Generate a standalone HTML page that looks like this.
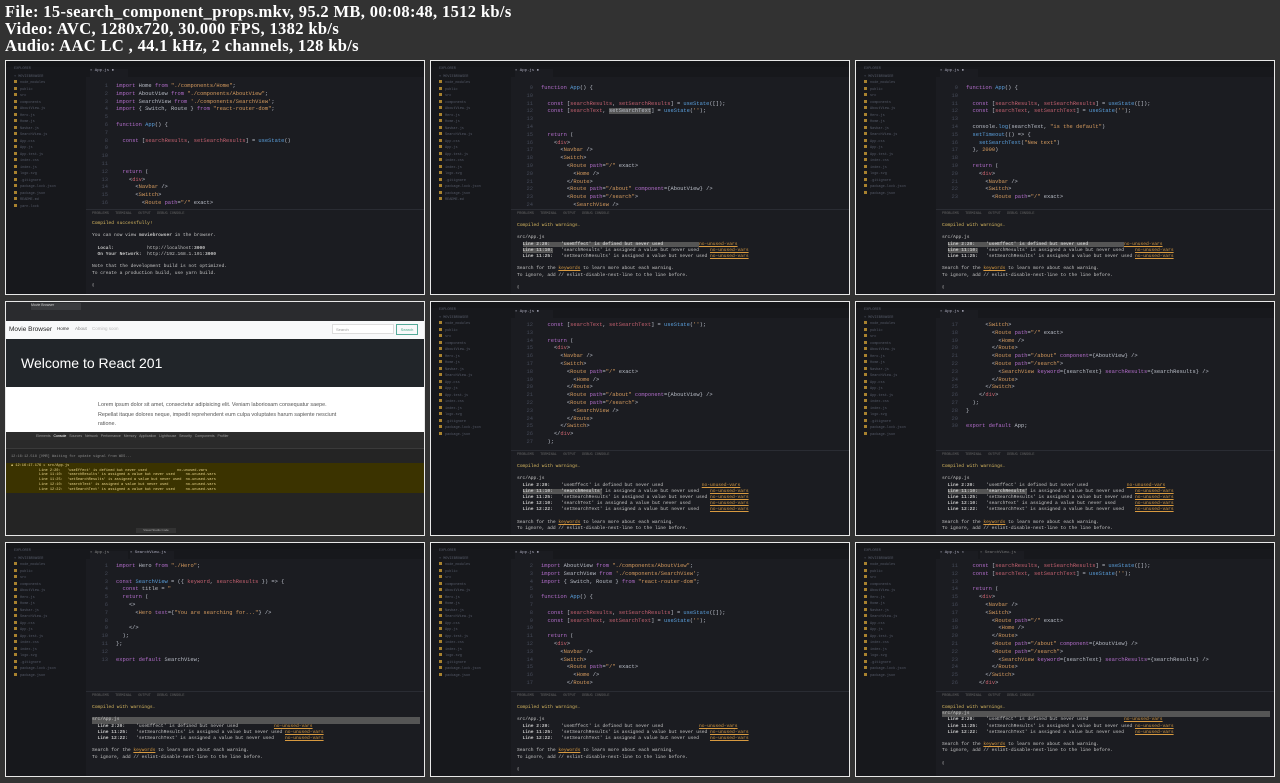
<!DOCTYPE html>
<html><head><meta charset="utf-8"><style>
body{margin:0;width:1280px;height:783px;background:#323232;overflow:hidden;font-family:"Liberation Serif",serif;position:relative}
.hd{position:absolute;left:5px;color:#fff;font-weight:bold;font-size:16.5px;line-height:17px;white-space:nowrap;letter-spacing:0.35px}
.t{position:absolute;width:418px;height:233px;border:1px solid #e8e8e8;background:#1b1c21;overflow:hidden;font-family:"Liberation Mono",monospace}
.tb{position:absolute;left:0;top:0;right:0;height:6px;background:#151619}
.sb{position:absolute;left:0;top:6px;width:80px;bottom:0;background:#17181c}
.sb div{height:6.5px;margin-left:8px;font-size:3.5px;color:#555a68}
.sb i{display:inline-block;width:3px;height:3px;background:#a8822f;margin-right:3px}
.tabs{position:absolute;left:80px;top:6px;right:0;height:10px;background:#17181c}
.tab{position:absolute;left:4px;top:2px;width:38px;height:8px;background:#1b1c21;color:#aab;font-size:4px}
.code{position:absolute;left:82px;top:20px;right:0;font-size:5.4px;line-height:7.8px;color:#b8bcc6;white-space:pre}
.code .n{color:#444957;display:inline-block;width:20px;text-align:right;margin-right:8px}
.k{color:#b06cc8}.s{color:#d49a5e}.g{color:#cc6470}.v{color:#c2606f}.f{color:#5a9fdc}.a{color:#b06cc8}
.pt{position:absolute;left:80px;right:0;top:148px;height:8px;border-top:1px solid #2a2c33;font-size:3.5px;color:#666;padding:2px 0 0 6px;white-space:pre}
.term{position:absolute;left:86px;top:162px;right:0;font-size:4.6px;line-height:6.2px;color:#c4c4c4;white-space:pre}
.y{color:#d8b860}.u{color:#d89a40;text-decoration:underline}
.hl{background:#555}
</style></head><body>
<div class="hd" style="top:3px">File: 15-search_component_props.mkv, 95.2 MB, 00:08:48, 1512 kb/s</div>
<div class="hd" style="top:20px">Video: AVC, 1280x720, 30.000 FPS, 1382 kb/s</div>
<div class="hd" style="top:37px">Audio: AAC LC , 44.1 kHz, 2 channels, 128 kb/s</div>

<!-- row1 col1 -->
<div class="t" style="left:5px;top:60px">
<div class="tb"></div><div class="sb"><div>EXPLORER</div><div>▾ MOVIEBROWSER</div><div><i></i>node_modules</div><div><i></i>public</div><div><i></i>src</div><div><i></i>components</div><div><i></i>AboutView.js</div><div><i></i>Hero.js</div><div><i></i>Home.js</div><div><i></i>Navbar.js</div><div><i></i>SearchView.js</div><div><i></i>App.css</div><div><i></i>App.js</div><div><i></i>App.test.js</div><div><i></i>index.css</div><div><i></i>index.js</div><div><i></i>logo.svg</div><div><i></i>.gitignore</div><div><i></i>package-lock.json</div><div><i></i>package.json</div><div><i></i>README.md</div><div><i></i>yarn.lock</div></div>
<div class="tabs"><div class="tab">▪ App.js ●</div></div>
<div class="code" style="top:22px"><span class="n">1</span><span class="k">import</span> Home <span class="k">from</span> <span class="s">"./components/Home"</span>;
<span class="n">2</span><span class="k">import</span> AboutView <span class="k">from</span> <span class="s">"./components/AboutView"</span>;
<span class="n">3</span><span class="k">import</span> SearchView <span class="k">from</span> <span class="s">'./components/SearchView'</span>;
<span class="n">4</span><span class="k">import</span> { Switch, Route } <span class="k">from</span> <span class="s">"react-router-dom"</span>;
<span class="n">5</span>
<span class="n">6</span><span class="k">function</span> <span class="f">App</span>() {
<span class="n">7</span>
<span class="n">8</span>  <span class="k">const</span> [<span class="v">searchResults</span>, <span class="v">setSearchResults</span>] = <span class="f">useState</span>()
<span class="n">9</span>
<span class="n">10</span>
<span class="n">11</span>
<span class="n">12</span>  <span class="k">return</span> (
<span class="n">13</span>    &lt;<span class="g">div</span>&gt;
<span class="n">14</span>      &lt;<span class="s">Navbar</span> /&gt;
<span class="n">15</span>      &lt;<span class="s">Switch</span>&gt;
<span class="n">16</span>        &lt;<span class="s">Route</span> <span class="a">path</span>=<span class="s">"/"</span> exact&gt;</div>
<div class="pt">PROBLEMS   TERMINAL   OUTPUT   DEBUG CONSOLE</div>
<div class="term" style="top:160px"><span class="y">Compiled successfully!</span>

You can now view <b>moviebrowser</b> in the browser.

  <b>Local:</b>            http://localhost:<b>3000</b>
  <b>On Your Network:</b>  http://192.168.1.101:<b>3000</b>

Note that the development build is not optimized.
To create a production build, use yarn build.

▯</div>
</div>

<!-- row1 col2 -->
<div class="t" style="left:430px;top:60px">
<div class="tb"></div><div class="sb"><div>EXPLORER</div><div>▾ MOVIEBROWSER</div><div><i></i>node_modules</div><div><i></i>public</div><div><i></i>src</div><div><i></i>components</div><div><i></i>AboutView.js</div><div><i></i>Hero.js</div><div><i></i>Home.js</div><div><i></i>Navbar.js</div><div><i></i>SearchView.js</div><div><i></i>App.css</div><div><i></i>App.js</div><div><i></i>App.test.js</div><div><i></i>index.css</div><div><i></i>index.js</div><div><i></i>logo.svg</div><div><i></i>.gitignore</div><div><i></i>package-lock.json</div><div><i></i>package.json</div><div><i></i>README.md</div></div>
<div class="tabs"><div class="tab">▪ App.js ●</div></div>
<div class="code" style="top:24px"><span class="n">9</span><span class="k">function</span> <span class="f">App</span>() {
<span class="n">10</span>
<span class="n">11</span>  <span class="k">const</span> [<span class="v">searchResults</span>, <span class="v">setSearchResults</span>] = <span class="f">useState</span>([]);
<span class="n">12</span>  <span class="k">const</span> [<span class="v">searchText</span>, <span class="hl">setSearchText</span>] = <span class="f">useState</span>(<span class="s">''</span>);
<span class="n">13</span>
<span class="n">14</span>
<span class="n">15</span>  <span class="k">return</span> (
<span class="n">16</span>    &lt;<span class="g">div</span>&gt;
<span class="n">17</span>      &lt;<span class="s">Navbar</span> /&gt;
<span class="n">18</span>      &lt;<span class="s">Switch</span>&gt;
<span class="n">19</span>        &lt;<span class="s">Route</span> <span class="a">path</span>=<span class="s">"/"</span> exact&gt;
<span class="n">20</span>          &lt;<span class="s">Home</span> /&gt;
<span class="n">21</span>        &lt;/<span class="s">Route</span>&gt;
<span class="n">22</span>        &lt;<span class="s">Route</span> <span class="a">path</span>=<span class="s">"/about"</span> <span class="a">component</span>={AboutView} /&gt;
<span class="n">23</span>        &lt;<span class="s">Route</span> <span class="a">path</span>=<span class="s">"/search"</span>&gt;
<span class="n">24</span>          &lt;<span class="s">SearchView</span> /&gt;</div>
<div class="pt">PROBLEMS   TERMINAL   OUTPUT   DEBUG CONSOLE</div>
<div class="term"><span class="y">Compiled with warnings.</span>

src/App.js
  <b class="hl">Line 2:20:    'useEffect' is defined but never used             </b><span class="u">no-unused-vars</span>
  <b class="hl">Line 11:10:</b>   'searchResults' is assigned a value but never used    <span class="u">no-unused-vars</span>
  <b>Line 11:25:</b>   'setSearchResults' is assigned a value but never used <span class="u">no-unused-vars</span>

Search for the <span class="u">keywords</span> to learn more about each warning.
To ignore, add // eslint-disable-next-line to the line before.

▯</div>
</div>

<!-- row1 col3 -->
<div class="t" style="left:855px;top:60px">
<div class="tb"></div><div class="sb"><div>EXPLORER</div><div>▾ MOVIEBROWSER</div><div><i></i>node_modules</div><div><i></i>public</div><div><i></i>src</div><div><i></i>components</div><div><i></i>AboutView.js</div><div><i></i>Hero.js</div><div><i></i>Home.js</div><div><i></i>Navbar.js</div><div><i></i>SearchView.js</div><div><i></i>App.css</div><div><i></i>App.js</div><div><i></i>App.test.js</div><div><i></i>index.css</div><div><i></i>index.js</div><div><i></i>logo.svg</div><div><i></i>.gitignore</div><div><i></i>package-lock.json</div><div><i></i>package.json</div></div>
<div class="tabs"><div class="tab">▪ App.js ●</div></div>
<div class="code" style="top:24px"><span class="n">9</span><span class="k">function</span> <span class="f">App</span>() {
<span class="n">10</span>
<span class="n">11</span>  <span class="k">const</span> [<span class="v">searchResults</span>, <span class="v">setSearchResults</span>] = <span class="f">useState</span>([]);
<span class="n">12</span>  <span class="k">const</span> [<span class="v">searchText</span>, <span class="v">setSearchText</span>] = <span class="f">useState</span>(<span class="s">''</span>);
<span class="n">13</span>
<span class="n">14</span>  console.<span class="f">log</span>(searchText, <span class="s">"is the default"</span>)
<span class="n">15</span>  <span class="f">setTimeout</span>(() =&gt; {
<span class="n">16</span>    <span class="f">setSearchText</span>(<span class="s">"New text"</span>)
<span class="n">17</span>  }, <span class="s">2000</span>)
<span class="n">18</span>
<span class="n">19</span>  <span class="k">return</span> (
<span class="n">20</span>    &lt;<span class="g">div</span>&gt;
<span class="n">21</span>      &lt;<span class="s">Navbar</span> /&gt;
<span class="n">22</span>      &lt;<span class="s">Switch</span>&gt;
<span class="n">23</span>        &lt;<span class="s">Route</span> <span class="a">path</span>=<span class="s">"/"</span> exact&gt;</div>
<div class="pt">PROBLEMS   TERMINAL   OUTPUT   DEBUG CONSOLE</div>
<div class="term"><span class="y">Compiled with warnings.</span>

src/App.js
  <b class="hl">Line 2:20:    'useEffect' is defined but never used             </b><span class="u">no-unused-vars</span>
  <b class="hl">Line 11:10:</b>   'searchResults' is assigned a value but never used    <span class="u">no-unused-vars</span>
  <b>Line 11:25:</b>   'setSearchResults' is assigned a value but never used <span class="u">no-unused-vars</span>

Search for the <span class="u">keywords</span> to learn more about each warning.
To ignore, add // eslint-disable-next-line to the line before.

▯</div>
</div>

<!-- row2 col1 browser -->
<div class="t" style="left:5px;top:301px;background:#fff;font-family:'Liberation Sans',sans-serif">
<div style="position:absolute;left:0;top:0;right:0;height:19px;background:#2a2b2e"></div>
<div style="position:absolute;left:25px;top:1px;width:50px;height:7px;background:#3a3b3e;font-size:3.5px;color:#ccc">Movie Browser</div>
<div style="position:absolute;left:0;top:19px;right:0;height:18px;background:#f8f9fa;font-size:6.5px;color:#222">
<span style="position:absolute;left:3px;top:5px">Movie Browser</span><span style="position:absolute;left:51px;top:5px;font-size:4.5px">Home</span><span style="position:absolute;left:69px;top:5px;font-size:4.5px;color:#888">About</span><span style="position:absolute;left:86px;top:5px;font-size:4.5px;color:#bbb">Coming soon</span>
<span style="position:absolute;left:326px;top:3px;width:62px;height:10px;border:1px solid #ddd;background:#fff;font-size:4px;color:#999;padding-left:3px;box-sizing:border-box;line-height:9px">Search</span>
<span style="position:absolute;left:390px;top:3px;width:22px;height:11px;border:1px solid #5a9;font-size:4px;color:#4a8;text-align:center;line-height:10px;box-sizing:border-box">Search</span></div>
<div style="position:absolute;left:0;top:37px;right:0;height:48px;background:#212529;color:#fff;font-size:14px"><span style="position:absolute;left:15px;top:16px">Welcome to React 201</span></div>
<div style="position:absolute;left:92px;top:99px;width:240px;font-size:5.4px;line-height:9.5px;color:#555">Lorem ipsum dolor sit amet, consectetur adipisicing elit. Veniam laboriosam consequatur saepe. Repellat itaque dolores neque, impedit reprehendent eum culpa voluptates harum sapiente nesciunt ratione.</div>
<div style="position:absolute;left:0;top:130px;right:0;bottom:0;background:#242424"></div>
<div style="position:absolute;left:0;top:130px;right:0;height:8px;background:#2d2d2d;font-size:3.5px;color:#999;padding:2px 0 0 30px;box-sizing:border-box;white-space:pre">Elements   <span style="color:#fff">Console</span>   Sources   Network   Performance   Memory   Application   Lighthouse   Security   Components   Profiler</div>
<div style="position:absolute;left:0;top:138px;right:0;height:8px;background:#2a2a2a;border-bottom:1px solid #3a3a3a"></div>
<div style="position:absolute;left:0;top:161px;right:0;height:29px;background:#3b3300;font-family:'Liberation Mono',monospace;font-size:3.6px;line-height:4.7px;color:#e8d48a;white-space:pre;padding:1px 0 0 5px">▲ 12:16:17.176 ▸ src/App.js
             Line 2:20:   'useEffect' is defined but never used              no-unused-vars
             Line 11:10:  'searchResults' is assigned a value but never used     no-unused-vars
             Line 11:25:  'setSearchResults' is assigned a value but never used  no-unused-vars
             Line 12:10:  'searchText' is assigned a value but never used        no-unused-vars
             Line 12:22:  'setSearchText' is assigned a value but never used     no-unused-vars</div>
<div style="position:absolute;left:5px;top:153px;font-family:'Liberation Mono',monospace;font-size:3.6px;color:#888">12:16:12.518 [HMR] Waiting for update signal from WDS...</div>
<div style="position:absolute;left:130px;top:226px;width:40px;height:5px;background:#333;font-size:3px;color:#aaa;text-align:center">Visual Studio Code</div>
</div>

<!-- row2 col2 -->
<div class="t" style="left:430px;top:301px">
<div class="tb"></div><div class="sb"><div>EXPLORER</div><div>▾ MOVIEBROWSER</div><div><i></i>node_modules</div><div><i></i>public</div><div><i></i>src</div><div><i></i>components</div><div><i></i>AboutView.js</div><div><i></i>Hero.js</div><div><i></i>Home.js</div><div><i></i>Navbar.js</div><div><i></i>SearchView.js</div><div><i></i>App.css</div><div><i></i>App.js</div><div><i></i>App.test.js</div><div><i></i>index.css</div><div><i></i>index.js</div><div><i></i>logo.svg</div><div><i></i>.gitignore</div><div><i></i>package-lock.json</div><div><i></i>package.json</div></div>
<div class="tabs"><div class="tab">▪ App.js ●</div></div>
<div class="code" style="top:20px"><span class="n">12</span>  <span class="k">const</span> [<span class="v">searchText</span>, <span class="v">setSearchText</span>] = <span class="f">useState</span>(<span class="s">''</span>);
<span class="n">13</span>
<span class="n">14</span>  <span class="k">return</span> (
<span class="n">15</span>    &lt;<span class="g">div</span>&gt;
<span class="n">16</span>      &lt;<span class="s">Navbar</span> /&gt;
<span class="n">17</span>      &lt;<span class="s">Switch</span>&gt;
<span class="n">18</span>        &lt;<span class="s">Route</span> <span class="a">path</span>=<span class="s">"/"</span> exact&gt;
<span class="n">19</span>          &lt;<span class="s">Home</span> /&gt;
<span class="n">20</span>        &lt;/<span class="s">Route</span>&gt;
<span class="n">21</span>        &lt;<span class="s">Route</span> <span class="a">path</span>=<span class="s">"/about"</span> <span class="a">component</span>={AboutView} /&gt;
<span class="n">22</span>        &lt;<span class="s">Route</span> <span class="a">path</span>=<span class="s">"/search"</span>&gt;
<span class="n">23</span>          &lt;<span class="s">SearchView</span> /&gt;
<span class="n">24</span>        &lt;/<span class="s">Route</span>&gt;
<span class="n">25</span>      &lt;/<span class="s">Switch</span>&gt;
<span class="n">26</span>    &lt;/<span class="g">div</span>&gt;
<span class="n">27</span>  );</div>
<div class="pt">PROBLEMS   TERMINAL   OUTPUT   DEBUG CONSOLE</div>
<div class="term"><span class="y">Compiled with warnings.</span>

src/App.js
  <b>Line 2:20:</b>    'useEffect' is defined but never used              <span class="u">no-unused-vars</span>
  <b class="hl">Line 11:10:   'searchResults'</b> is assigned a value but never used    <span class="u">no-unused-vars</span>
  <b>Line 11:25:</b>   'setSearchResults' is assigned a value but never used <span class="u">no-unused-vars</span>
  <b>Line 12:10:</b>   'searchText' is assigned a value but never used       <span class="u">no-unused-vars</span>
  <b>Line 12:22:</b>   'setSearchText' is assigned a value but never used    <span class="u">no-unused-vars</span>

Search for the <span class="u">keywords</span> to learn more about each warning.
To ignore, add // eslint-disable-next-line to the line before.</div>
</div>

<!-- row2 col3 -->
<div class="t" style="left:855px;top:301px">
<div class="tb"></div><div class="sb"><div>EXPLORER</div><div>▾ MOVIEBROWSER</div><div><i></i>node_modules</div><div><i></i>public</div><div><i></i>src</div><div><i></i>components</div><div><i></i>AboutView.js</div><div><i></i>Hero.js</div><div><i></i>Home.js</div><div><i></i>Navbar.js</div><div><i></i>SearchView.js</div><div><i></i>App.css</div><div><i></i>App.js</div><div><i></i>App.test.js</div><div><i></i>index.css</div><div><i></i>index.js</div><div><i></i>logo.svg</div><div><i></i>.gitignore</div><div><i></i>package-lock.json</div><div><i></i>package.json</div></div>
<div class="tabs"><div class="tab">▪ App.js ●</div></div>
<div class="code" style="top:20px"><span class="n">17</span>      &lt;<span class="s">Switch</span>&gt;
<span class="n">18</span>        &lt;<span class="s">Route</span> <span class="a">path</span>=<span class="s">"/"</span> exact&gt;
<span class="n">19</span>          &lt;<span class="s">Home</span> /&gt;
<span class="n">20</span>        &lt;/<span class="s">Route</span>&gt;
<span class="n">21</span>        &lt;<span class="s">Route</span> <span class="a">path</span>=<span class="s">"/about"</span> <span class="a">component</span>={AboutView} /&gt;
<span class="n">22</span>        &lt;<span class="s">Route</span> <span class="a">path</span>=<span class="s">"/search"</span>&gt;
<span class="n">23</span>          &lt;<span class="s">SearchView</span> <span class="a">keyword</span>={searchText} <span class="a">searchResults</span>={searchResults} /&gt;
<span class="n">24</span>        &lt;/<span class="s">Route</span>&gt;
<span class="n">25</span>      &lt;/<span class="s">Switch</span>&gt;
<span class="n">26</span>    &lt;/<span class="g">div</span>&gt;
<span class="n">27</span>  );
<span class="n">28</span>}
<span class="n">29</span>
<span class="n">30</span><span class="k">export default</span> App;</div>
<div class="pt">PROBLEMS   TERMINAL   OUTPUT   DEBUG CONSOLE</div>
<div class="term"><span class="y">Compiled with warnings.</span>

src/App.js
  <b>Line 2:20:</b>    'useEffect' is defined but never used              <span class="u">no-unused-vars</span>
  <b class="hl">Line 11:10:   'searchResults'</b> is assigned a value but never used    <span class="u">no-unused-vars</span>
  <b>Line 11:25:</b>   'setSearchResults' is assigned a value but never used <span class="u">no-unused-vars</span>
  <b>Line 12:10:</b>   'searchText' is assigned a value but never used       <span class="u">no-unused-vars</span>
  <b>Line 12:22:</b>   'setSearchText' is assigned a value but never used    <span class="u">no-unused-vars</span>

Search for the <span class="u">keywords</span> to learn more about each warning.
To ignore, add // eslint-disable-next-line to the line before.</div>
</div>

<!-- row3 col1 -->
<div class="t" style="left:5px;top:542px">
<div class="tb"></div><div class="sb"><div>EXPLORER</div><div>▾ MOVIEBROWSER</div><div><i></i>node_modules</div><div><i></i>public</div><div><i></i>src</div><div><i></i>components</div><div><i></i>AboutView.js</div><div><i></i>Hero.js</div><div><i></i>Home.js</div><div><i></i>Navbar.js</div><div><i></i>SearchView.js</div><div><i></i>App.css</div><div><i></i>App.js</div><div><i></i>App.test.js</div><div><i></i>index.css</div><div><i></i>index.js</div><div><i></i>logo.svg</div><div><i></i>.gitignore</div><div><i></i>package-lock.json</div><div><i></i>package.json</div></div>
<div class="tabs"><div class="tab" style="color:#888">▪ App.js</div><div class="tab" style="left:44px;width:44px">▪ SearchView.js</div></div>
<div class="code" style="top:20px"><span class="n">1</span><span class="k">import</span> Hero <span class="k">from</span> <span class="s">"./Hero"</span>;
<span class="n">2</span>
<span class="n">3</span><span class="k">const</span> <span class="f">SearchView</span> = ({ <span class="v">keyword</span>, <span class="v">searchResults</span> }) =&gt; {
<span class="n">4</span>  <span class="k">const</span> title = <span class="s">"</span>
<span class="n">5</span>  <span class="k">return</span> (
<span class="n">6</span>    &lt;&gt;
<span class="n">7</span>      &lt;<span class="s">Hero</span> <span class="a">text</span>={<span class="s">"You are searching for..."</span>} /&gt;
<span class="n">8</span>
<span class="n">9</span>    &lt;/&gt;
<span class="n">10</span>  );
<span class="n">11</span>};
<span class="n">12</span>
<span class="n">13</span><span class="k">export default</span> SearchView;</div>
<div class="pt">PROBLEMS   TERMINAL   OUTPUT   DEBUG CONSOLE</div>
<div class="term"><span class="y">Compiled with warnings.</span>

<span style="background:#555;display:inline-block;width:328px">src/App.js</span>
  <b>Line 2:20:</b>    'useEffect' is defined but never used             <span class="u">no-unused-vars</span>
  <b>Line 11:25:</b>   'setSearchResults' is assigned a value but never used <span class="u">no-unused-vars</span>
  <b>Line 12:22:</b>   'setSearchText' is assigned a value but never used    <span class="u">no-unused-vars</span>

Search for the <span class="u">keywords</span> to learn more about each warning.
To ignore, add // eslint-disable-next-line to the line before.</div>
</div>

<!-- row3 col2 -->
<div class="t" style="left:430px;top:542px">
<div class="tb"></div><div class="sb"><div>EXPLORER</div><div>▾ MOVIEBROWSER</div><div><i></i>node_modules</div><div><i></i>public</div><div><i></i>src</div><div><i></i>components</div><div><i></i>AboutView.js</div><div><i></i>Hero.js</div><div><i></i>Home.js</div><div><i></i>Navbar.js</div><div><i></i>SearchView.js</div><div><i></i>App.css</div><div><i></i>App.js</div><div><i></i>App.test.js</div><div><i></i>index.css</div><div><i></i>index.js</div><div><i></i>logo.svg</div><div><i></i>.gitignore</div><div><i></i>package-lock.json</div><div><i></i>package.json</div></div>
<div class="tabs"><div class="tab">▪ App.js ●</div></div>
<div class="code" style="top:20px"><span class="n">2</span><span class="k">import</span> AboutView <span class="k">from</span> <span class="s">"./components/AboutView"</span>;
<span class="n">3</span><span class="k">import</span> SearchView <span class="k">from</span> <span class="s">'./components/SearchView'</span>;
<span class="n">4</span><span class="k">import</span> { Switch, Route } <span class="k">from</span> <span class="s">"react-router-dom"</span>;
<span class="n">5</span>
<span class="n">6</span><span class="k">function</span> <span class="f">App</span>() {
<span class="n">7</span>
<span class="n">8</span>  <span class="k">const</span> [<span class="v">searchResults</span>, <span class="v">setSearchResults</span>] = <span class="f">useState</span>([]);
<span class="n">9</span>  <span class="k">const</span> [<span class="v">searchText</span>, <span class="v">setSearchText</span>] = <span class="f">useState</span>(<span class="s">''</span>);
<span class="n">10</span>
<span class="n">11</span>  <span class="k">return</span> (
<span class="n">12</span>    &lt;<span class="g">div</span>&gt;
<span class="n">13</span>      &lt;<span class="s">Navbar</span> /&gt;
<span class="n">14</span>      &lt;<span class="s">Switch</span>&gt;
<span class="n">15</span>        &lt;<span class="s">Route</span> <span class="a">path</span>=<span class="s">"/"</span> exact&gt;
<span class="n">16</span>          &lt;<span class="s">Home</span> /&gt;
<span class="n">17</span>        &lt;/<span class="s">Route</span>&gt;</div>
<div class="pt">PROBLEMS   TERMINAL   OUTPUT   DEBUG CONSOLE</div>
<div class="term"><span class="y">Compiled with warnings.</span>

src/App.js
  <b>Line 2:20:</b>    'useEffect' is defined but never used             <span class="u">no-unused-vars</span>
  <b>Line 11:25:</b>   'setSearchResults' is assigned a value but never used <span class="u">no-unused-vars</span>
  <b>Line 12:22:</b>   'setSearchText' is assigned a value but never used    <span class="u">no-unused-vars</span>

Search for the <span class="u">keywords</span> to learn more about each warning.
To ignore, add // eslint-disable-next-line to the line before.

▯</div>
</div>

<!-- row3 col3 -->
<div class="t" style="left:855px;top:542px">
<div class="tb"></div><div class="sb"><div>EXPLORER</div><div>▾ MOVIEBROWSER</div><div><i></i>node_modules</div><div><i></i>public</div><div><i></i>src</div><div><i></i>components</div><div><i></i>AboutView.js</div><div><i></i>Hero.js</div><div><i></i>Home.js</div><div><i></i>Navbar.js</div><div><i></i>SearchView.js</div><div><i></i>App.css</div><div><i></i>App.js</div><div><i></i>App.test.js</div><div><i></i>index.css</div><div><i></i>index.js</div><div><i></i>logo.svg</div><div><i></i>.gitignore</div><div><i></i>package-lock.json</div><div><i></i>package.json</div></div>
<div class="tabs"><div class="tab">▪ App.js ×</div><div class="tab" style="left:44px;width:44px;color:#777">▪ SearchView.js</div></div>
<div class="code" style="top:20px"><span class="n">11</span>  <span class="k">const</span> [<span class="v">searchResults</span>, <span class="v">setSearchResults</span>] = <span class="f">useState</span>([]);
<span class="n">12</span>  <span class="k">const</span> [<span class="v">searchText</span>, <span class="v">setSearchText</span>] = <span class="f">useState</span>(<span class="s">''</span>);
<span class="n">13</span>
<span class="n">14</span>  <span class="k">return</span> (
<span class="n">15</span>    &lt;<span class="g">div</span>&gt;
<span class="n">16</span>      &lt;<span class="s">Navbar</span> /&gt;
<span class="n">17</span>      &lt;<span class="s">Switch</span>&gt;
<span class="n">18</span>        &lt;<span class="s">Route</span> <span class="a">path</span>=<span class="s">"/"</span> exact&gt;
<span class="n">19</span>          &lt;<span class="s">Home</span> /&gt;
<span class="n">20</span>        &lt;/<span class="s">Route</span>&gt;
<span class="n">21</span>        &lt;<span class="s">Route</span> <span class="a">path</span>=<span class="s">"/about"</span> <span class="a">component</span>={AboutView} /&gt;
<span class="n">22</span>        &lt;<span class="s">Route</span> <span class="a">path</span>=<span class="s">"/search"</span>&gt;
<span class="n">23</span>          &lt;<span class="s">SearchView</span> <span class="a">keyword</span>={searchText} <span class="a">searchResults</span>={searchResults} /&gt;
<span class="n">24</span>        &lt;/<span class="s">Route</span>&gt;
<span class="n">25</span>      &lt;/<span class="s">Switch</span>&gt;
<span class="n">26</span>    &lt;/<span class="g">div</span>&gt;</div>
<div class="pt">PROBLEMS   TERMINAL   OUTPUT   DEBUG CONSOLE</div>
<div class="term"><span class="y">Compiled with warnings.</span>
<span style="background:#555;display:inline-block;width:328px">src/App.js</span>
  <b>Line 2:20:</b>    'useEffect' is defined but never used             <span class="u">no-unused-vars</span>
  <b>Line 11:25:</b>   'setSearchResults' is assigned a value but never used <span class="u">no-unused-vars</span>
  <b>Line 12:22:</b>   'setSearchText' is assigned a value but never used    <span class="u">no-unused-vars</span>

Search for the <span class="u">keywords</span> to learn more about each warning.
To ignore, add // eslint-disable-next-line to the line before.

▯</div>
</div>
</body></html>
